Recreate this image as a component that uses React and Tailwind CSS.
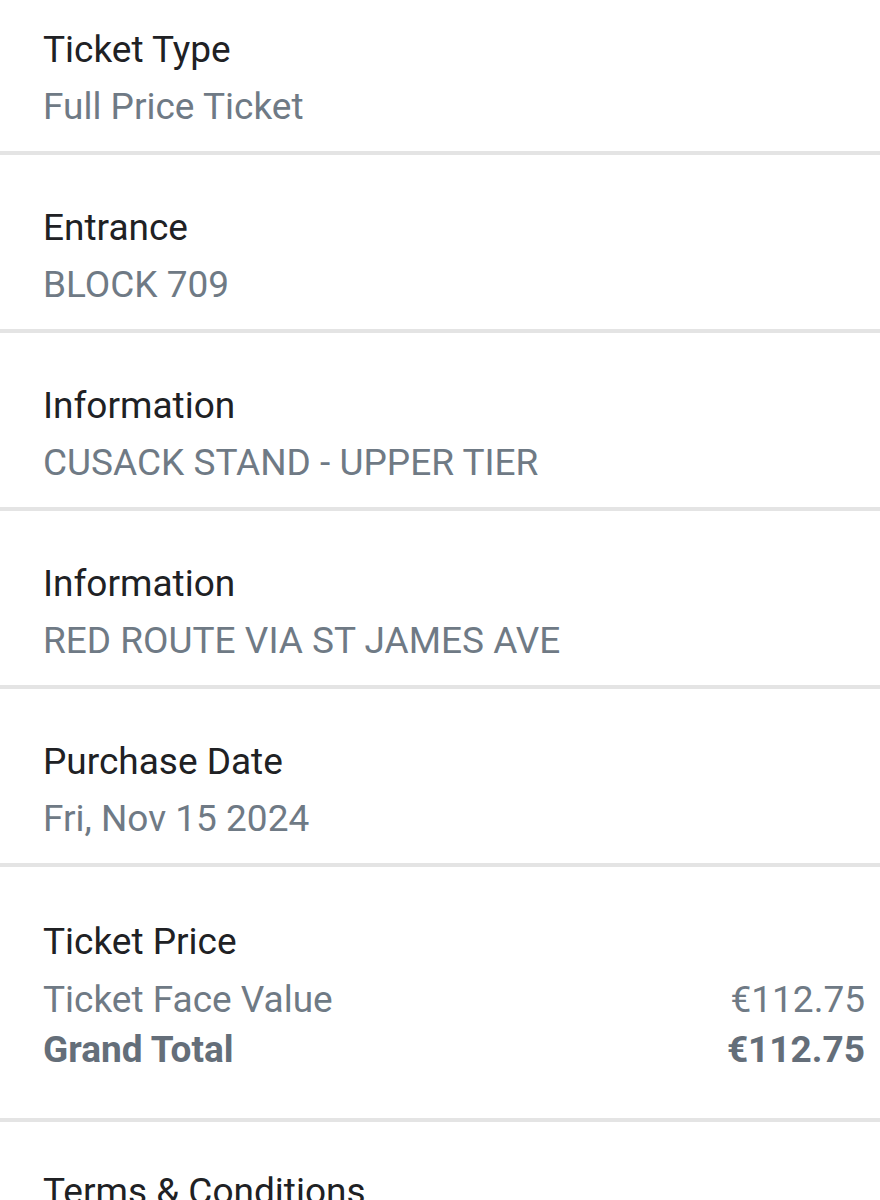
const rows = [
  { label: "Ticket Type", value: "Full Price Ticket" },
  { label: "Entrance", value: "BLOCK 709" },
  { label: "Information", value: "CUSACK STAND - UPPER TIER" },
  { label: "Information", value: "RED ROUTE VIA ST JAMES AVE" },
  { label: "Purchase Date", value: "Fri, Nov 15 2024" },
];

function Divider() {
  return <div className="h-[4px] bg-[#e4e4e4]" />;
}

export default function App() {
  return (
    <div
      className="w-[880px] h-[1200px] overflow-hidden bg-white"
      style={{ fontFamily: "Roboto, 'Noto Sans', sans-serif" }}
    >
      {rows.map((r, i) => (
        <div key={i}>
          <div className={`pl-[43px] pr-[15px] pb-[20px] ${i === 0 ? "pt-[26px]" : "pt-[49px]"}`}>
            <div className="text-[37px] leading-[48px] text-[#202124]">{r.label}</div>
            <div className="mt-[9px] text-[37px] leading-[48px] text-[#6f7a85]">{r.value}</div>
          </div>
          <Divider />
        </div>
      ))}

      {/* Ticket Price */}
      <div className="pl-[43px] pr-[15px] pt-[51px] pb-[44px]">
        <div className="text-[37px] leading-[48px] text-[#202124]">Ticket Price</div>
        <div className="mt-[10px] flex items-center justify-between text-[37px] leading-[48px] text-[#6f7a85]">
          <span>Ticket Face Value</span>
          <span>€112.75</span>
        </div>
        <div className="mt-[2px] flex items-center justify-between text-[37px] leading-[48px] font-bold text-[#646e79]">
          <span>Grand Total</span>
          <span>€112.75</span>
        </div>
      </div>
      <Divider />

      <div className="pl-[43px] pt-[46px]">
        <div className="text-[37px] leading-[48px] text-[#202124]">Terms &amp; Conditions</div>
      </div>
    </div>
  );
}
